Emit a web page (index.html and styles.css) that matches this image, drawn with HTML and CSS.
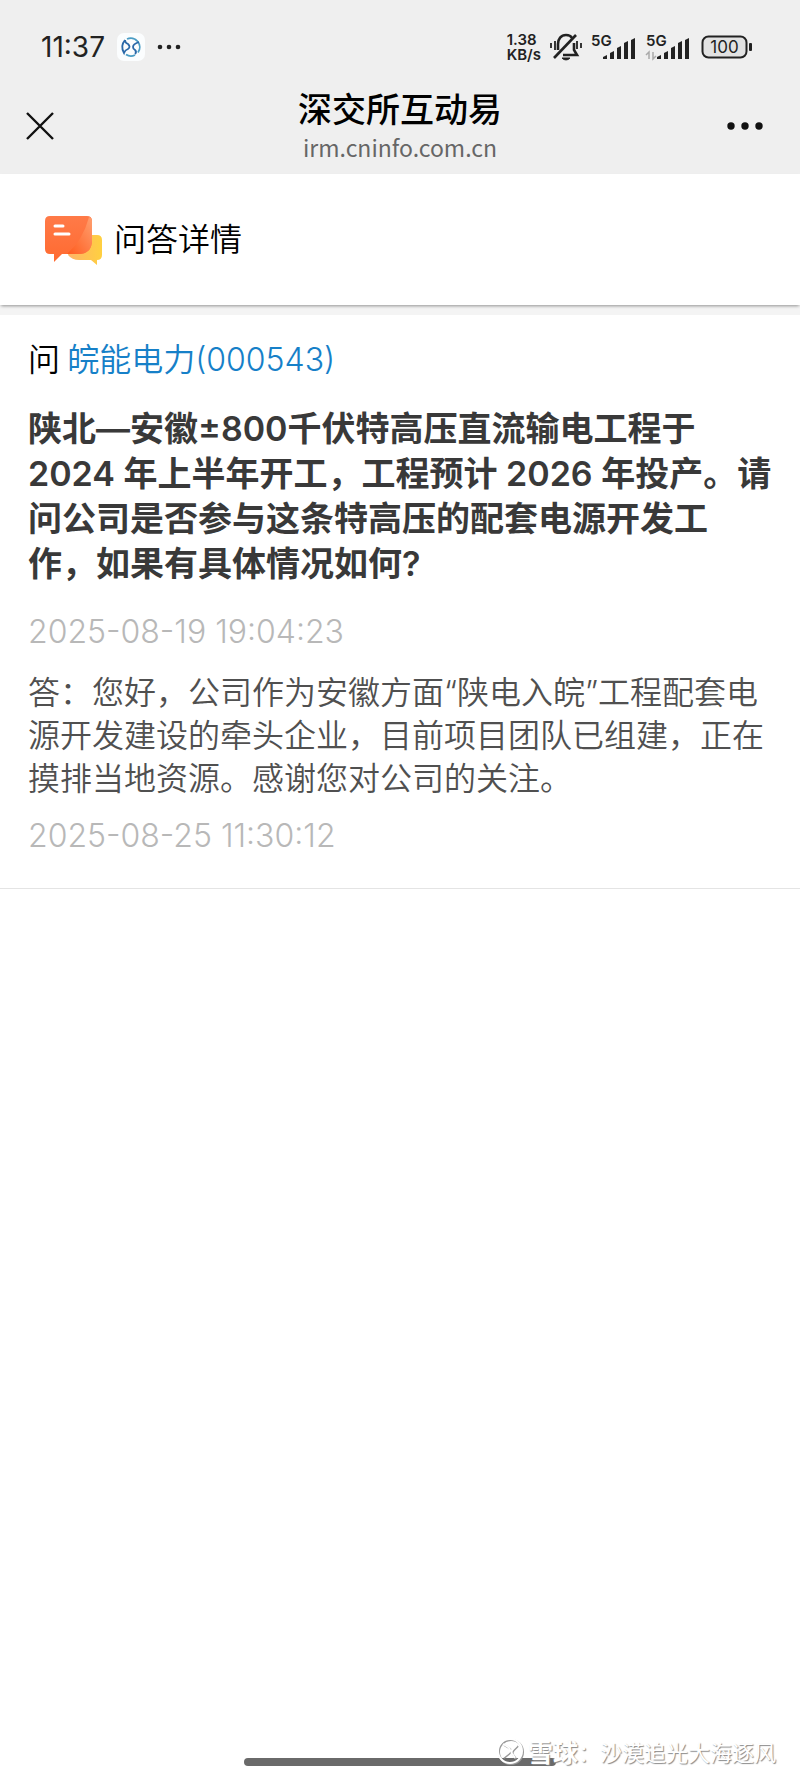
FILE: index.html
```html
<!DOCTYPE html>
<html lang="zh-CN">
<head>
    <meta charset="UTF-8">
    <meta name="viewport" content="width=device-width, initial-scale=1.0">
    <title>深交所互动易</title>
    <link rel="stylesheet" href="styles.css">
</head>
<body>
    <header class="top">
        <div class="status-bar">
            <span class="clock">11:37</span>
            <svg class="app-icon" width="28" height="28" viewBox="0 0 28 28" fill="none">
                <rect width="28" height="28" rx="7" fill="#fbfdfe"/>
                <path d="M10 6A9 9 0 0 1 21 19.500M18 22A9 9 0 0 1 9 21.500" stroke="#4a9cc4" stroke-width="1.800"/>
                <path d="M8 7Q3 13 7 20Q8 17 11 16Q14 14 11 11Q8 10 8 7M22 9Q16 11 16 14Q16 16 18 17Q20 19 18 21" stroke="#2a68a8" stroke-width="1.800"/>
            </svg>
            <svg class="notif-dots" width="24" height="6" viewBox="0 0 24 6" fill="#222">
                <circle cx="3" cy="3" r="2.3"/><circle cx="12" cy="3" r="2.3"/><circle cx="21" cy="3" r="2.3"/>
            </svg>
            <div class="status-right">
                <div class="net-speed"><span>1.38</span><span>KB/s</span></div>
                <svg width="34" height="30" viewBox="0 0 34 30" fill="none" stroke="#222" stroke-width="2">
                    <path d="M9 18v-6c0-5 3-9 8-9 3 0 5 1 6 3M25 11v7l3 5H14" stroke-width="2.6"/>
                    <path d="M5 26L27 3" stroke-width="2.6"/>
                    <path d="M13 26c2 2.500 6 2.500 8 0z" fill="#222" stroke-width="1"/>
                    <path d="M2 11v5M6 9v9M28 9v8M32 11v5" stroke-width="1.800"/>
                </svg>
                <svg width="46" height="30" viewBox="0 0 46 30">
                    <text class="net-type" x="0" y="14">5G</text>
                    <path d="M12 25l4-2v4h-4zM19 21l4-2v8h-4zM26 16l4-2v13h-4zM33 11l4-2v18h-4zM40 8l4-2v21h-4z" fill="#222"/>
                </svg>
                <svg width="46" height="30" viewBox="0 0 46 30">
                    <text class="net-type" x="1" y="14">5G</text>
                    <path d="M4 27v-7l-3 3M8 20v7l3-3" fill="none" stroke="#aaa" stroke-width="1.500"/>
                    <path d="M12 25l4-2v4h-4zM19 21l4-2v8h-4zM26 16l4-2v13h-4zM33 11l4-2v18h-4zM40 8l4-2v21h-4z" fill="#222"/>
                </svg>
                <svg class="battery" width="52" height="24" viewBox="0 0 52 24">
                    <rect x="1.500" y="1.500" width="44" height="21" rx="6" fill="#e2e2e2" stroke="#222" stroke-width="2"/>
                    <rect x="48" y="8" width="3" height="8" rx="1" fill="#222"/>
                    <text class="battery-text" x="23.500" y="18" text-anchor="middle">100</text>
                </svg>
            </div>
        </div>
        <nav class="nav-bar">
            <button class="nav-btn" aria-label="关闭">
                <svg width="28" height="28" viewBox="0 0 28 28" stroke="#111" stroke-width="2.4">
                    <path d="M1 1l26 26M27 1L1 27"/>
                </svg>
            </button>
            <div class="nav-title">
                <h1>深交所互动易</h1>
                <p>irm.cninfo.com.cn</p>
            </div>
            <button class="nav-btn nav-more" aria-label="更多">
                <svg width="38" height="8" viewBox="0 0 38 8" fill="#111">
                    <circle cx="5" cy="4" r="3.700"/><circle cx="19" cy="4" r="3.700"/><circle cx="33" cy="4" r="3.700"/>
                </svg>
            </button>
        </nav>
    </header>

    <div class="section-head">
        <svg width="58" height="50" viewBox="0 0 58 50">
            <defs>
                <linearGradient id="orange" x1="0" y1="0" x2="0" y2="1">
                    <stop offset="0" stop-color="#ff7a48"/>
                    <stop offset="1" stop-color="#ff6a30"/>
                </linearGradient>
                <linearGradient id="shine" x1="1" y1="0" x2="0" y2="1">
                    <stop offset="0" stop-color="#ffa070"/>
                    <stop offset="1" stop-color="#ff5a1c"/>
                </linearGradient>
                <linearGradient id="yellow" x1="0" y1="0" x2="1" y2="0">
                    <stop offset="0" stop-color="#ffb468"/>
                    <stop offset="1" stop-color="#ffd040"/>
                </linearGradient>
            </defs>
            <path d="M28 19h24q5 0 5 5v15q0 5-5 5v5l-6-5H34q-7 0-11-5z" fill="url(#yellow)"/>
            <path d="M5 0h37q5 0 5 5v19q0 14-14 14H17l-8 8v-8H5q-5 0-5-5V5q0-5 5-5z" fill="url(#orange)"/>
            <path d="M44 1q3 1 3 4v19q0 14-14 14H22Q38 24 44 1z" fill="url(#shine)"/>
            <path d="M10 10h8M10 18h14" stroke="#fff" stroke-width="3" stroke-linecap="round"/>
        </svg>
        <h2>问答详情</h2>
    </div>

    <main class="qa">
        <p class="company">问 <a href="#">皖能电力(000543)</a></p>
        <h3 class="question">陕北—安徽±800千伏特高压直流输电工程于 2024 年上半年开工，工程预计 2026 年投产。请问公司是否参与这条特高压的配套电源开发工作，如果有具体情况如何?</h3>
        <time class="date">2025-08-19 19:04:23</time>
        <p class="answer">答：您好，公司作为安徽方面“陕电入皖”工程配套电源开发建设的牵头企业，目前项目团队已组建，正在摸排当地资源。感谢您对公司的关注。</p>
        <time class="date">2025-08-25 11:30:12</time>
    </main>

    <footer class="bottom">
        <div class="home-bar"></div>
        <div class="watermark">
            <svg width="28" height="28" viewBox="0 0 28 28" fill="none">
                <g stroke="#999" transform="translate(1 1)">
                    <circle cx="14" cy="14" r="12" stroke-width="2"/>
                    <path d="M7 7l5 3q4 3 0 6l-5 4M21 8l-4 4q-3 3 0 6l2 3" stroke-width="2"/>
                </g>
                <g stroke="#fff">
                    <circle cx="14" cy="14" r="12" stroke-width="2"/>
                    <path d="M7 7l5 3q4 3 0 6l-5 4M21 8l-4 4q-3 3 0 6l2 3" stroke-width="2"/>
                </g>
            </svg>
            <b>雪球</b><span>：沙漠追光大海逐风</span>
        </div>
    </footer>
</body>
</html>
```
FILE: styles.css
```css
* {margin: 0; padding: 0; box-sizing: border-box;}
body {
    min-height: 100vh;
    display: flex;
    flex-direction: column;
    background: #fff;
    color: #000;
    font-family: "Noto Sans CJK SC", sans-serif;
}

.top {
    background: #efefef;
    height: 174px;
}

.status-bar {
    display: flex;
    align-items: center;
    height: 94px;
    padding: 0 47px 0 41px;
}

.clock {
    font-family: Inter, sans-serif;
    font-size: 28px;
    line-height: 32px;
    color: #222;
}

.app-icon {
    margin-left: 12px;
}

.notif-dots {
    margin-left: 12px;
}

.status-right {
    display: flex;
    align-items: center;
    gap: 8px;
    margin-left: auto;
}

.net-speed {
    display: flex;
    flex-direction: column;
    font-family: Inter, sans-serif;
    font-size: 15px;
    font-weight: 600;
    line-height: 15px;
    color: #222;
}

.net-type {
    font-family: Inter, sans-serif;
    font-size: 15px;
    font-weight: 600;
    fill: #222;
}

.battery {
    margin-left: 2px;
}

.battery-text {
    font-family: Inter, sans-serif;
    font-size: 17px;
    fill: #222;
}

.nav-bar {
    display: flex;
    height: 80px;
    padding: 0 26px;
}

.nav-btn {
    flex: 1;
    display: flex;
    align-items: center;
    height: 64px;
    background: none;
    border: none;
    cursor: pointer;
}

.nav-more {
    justify-content: flex-end;
}

.nav-more svg {
    margin-right: 10px;
}

.nav-title {
    text-align: center;
}

.nav-title h1 {
    margin-top: -6px;
    font-size: 34px;
    font-weight: 500;
    line-height: 40px;
}

.nav-title p {
    font-size: 23px;
    line-height: 38px;
    color: #666;
}

.section-head {
    display: flex;
    align-items: center;
    gap: 11px;
    height: 131px;
    padding: 2px 45px 0;
    box-shadow: 0 2px 3px -1px rgba(0,0,0,0.4);
    position: relative;
}

.section-head h2 {
    padding-bottom: 8px;
    font-size: 32px;
    font-weight: 350;
    line-height: 48px;
}

.qa {
    border-top: 10px solid #f4f4f4;
    border-bottom: 1px solid #e4e4e4;
    padding: 18px 28px 28px;
}

.company {
    font-size: 32px;
    font-weight: 350;
    line-height: 48px;
}

.company a {
    font-family: Inter, "Noto Sans CJK SC", sans-serif;
    color: #1680c8;
    text-decoration: none;
}

.question {
    margin-top: 22px;
    font-family: Inter, "Noto Sans CJK SC", sans-serif;
    font-size: 34px;
    font-weight: 600;
    line-height: 45px;
    color: #393939;
}

.date {
    display: block;
    margin-top: 22px;
    font-family: Inter, sans-serif;
    font-size: 32px;
    font-weight: 300;
    line-height: 48px;
    color: #b8b8b8;
}

.answer {
    margin-top: 15px;
    font-family: Inter, "Noto Sans CJK SC", sans-serif;
    font-size: 32px;
    font-weight: 350;
    line-height: 43px;
    color: #505050;
}

.answer + .date {
    margin-top: 12px;
}

.bottom {
    position: relative;
    margin-top: auto;
    padding-bottom: 12px;
}

.home-bar {
    width: 39%;
    height: 8px;
    margin: 0 auto;
    border-radius: 4px;
    background: #6a6a6a;
}

.watermark {
    position: absolute;
    right: 24px;
    bottom: 11px;
    display: flex;
    align-items: center;
    font-size: 22px;
    line-height: 32px;
    color: #fff;
    text-shadow: 1px 1px 1px #888;
}

.watermark b {
    margin-left: 4px;
    font-size: 25px;
}
```
